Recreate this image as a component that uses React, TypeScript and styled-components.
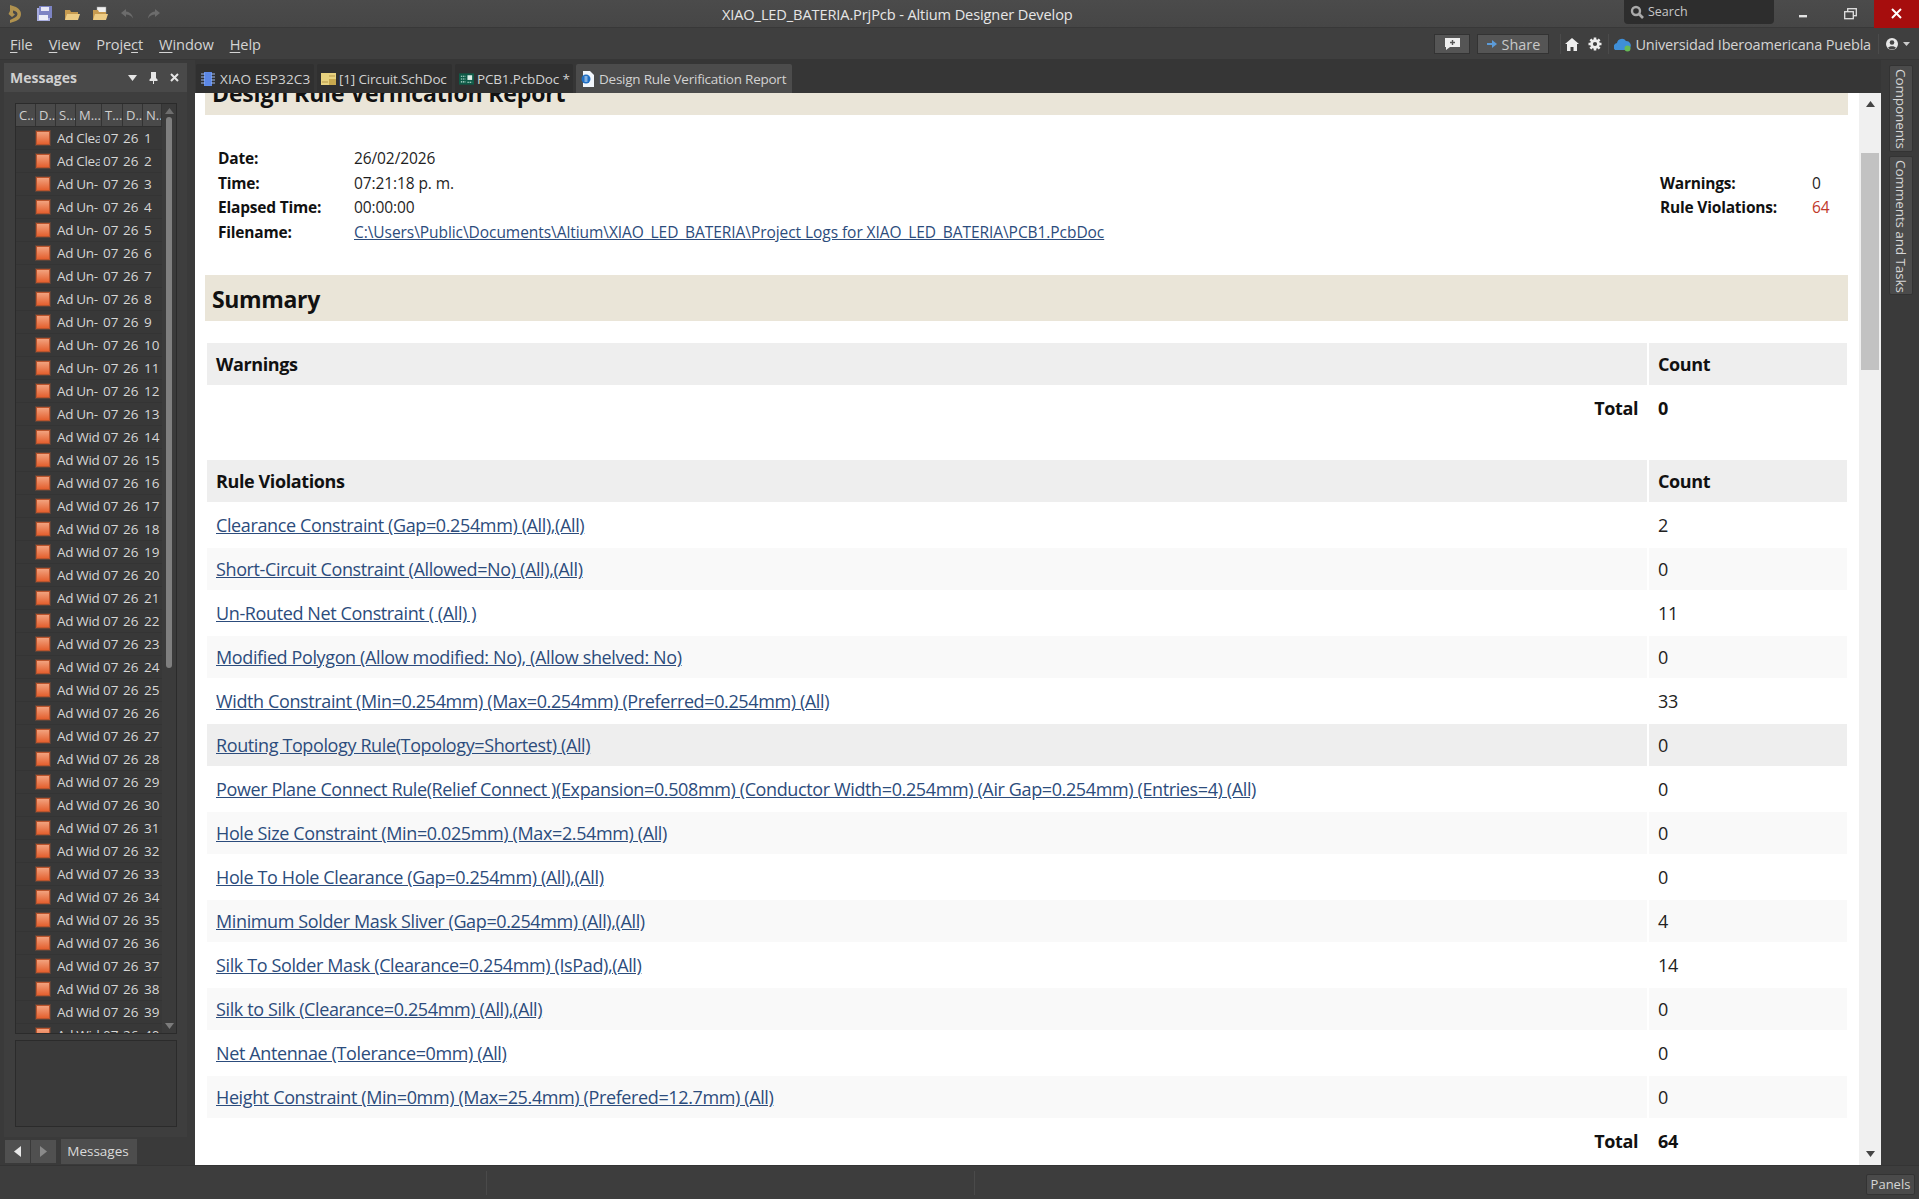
import React from "react";
import styled, { createGlobalStyle } from "styled-components";

const Global = createGlobalStyle`
  html, body { margin: 0; padding: 0; background: #3a3a3a; overflow: hidden; }
  * { box-sizing: border-box; }
  body { font-family: "Open Sans", "Noto Sans", "Liberation Sans", sans-serif; }
`;

const Shell = styled.div`
  width: 1919px; height: 1199px; display: flex; flex-direction: column;
  background: #3a3a3a; color: #dcdcdc; overflow: hidden;
`;

/* ---------- title bar ---------- */
const TitleBar = styled.header`
  height: 28px; flex: none; display: flex; align-items: center; position: relative;
  background: linear-gradient(#4b4b4b, #464646);
  border-bottom: 1px solid #383838;
`;
const QuickTools = styled.div`
  display: flex; align-items: center; gap: 11px; padding-left: 7px; width: 420px;
`;
const TitleText = styled.div`
  position: absolute; left: 722px; top: 4px; white-space: nowrap;
  font-size: 14.6px; line-height: 21px; letter-spacing: -0.12px; color: #e6e6e6;
`;
const TitleRight = styled.div`
  margin-left: auto; display: flex; align-items: flex-start; height: 28px; position: relative;
`;
const SearchBox = styled.div`
  width: 150px; height: 24px; background: #2d2d2d; border-radius: 0 0 4px 4px;
  display: flex; align-items: center; gap: 4px; padding-left: 6px;
  font-size: 12.5px; color: #c8c8c8;
`;
const WinBtn = styled.div<{ $w: number; $close?: boolean; $pr?: number }>`
  width: ${p => p.$w}px; height: 28px; display: flex; align-items: center; justify-content: center;
  padding-right: ${p => p.$pr ?? 0}px;
  background: ${p => (p.$close ? "#a60d0d" : "transparent")};
`;

/* ---------- menu bar ---------- */
const MenuBar = styled.nav`
  height: 32px; flex: none; display: flex; align-items: center;
  background: #3f3f3f; border-bottom: 1px solid #363636; padding-left: 10px;
`;
const MenuItem = styled.span`
  font-size: 14.6px; margin-right: 16px; letter-spacing: -0.1px; color: #d4d4d4;
  u { text-underline-offset: 2px; }
`;
const MenuRight = styled.div`
  margin-left: auto; display: flex; align-items: center; height: 100%; padding-top: 1px;
`;
const SmallBtn = styled.div<{ $w: number }>`
  width: ${p => p.$w}px; height: 20px; background: #555; border: 1px solid #333;
  display: flex; align-items: center; justify-content: center; gap: 4px;
  font-size: 14.4px; color: #c9c9c9; margin-right: 7px;
`;
const Sep = styled.div<{ $l?: number; $r?: number }>`
  width: 1px; height: 20px; background: #4b4b4b; margin: 0 ${p => p.$r ?? 6}px 0 ${p => p.$l ?? 6}px;
`;
const IconGap = styled.span<{ $w: number }>`
  width: ${p => p.$w}px; flex: none;
`;
const OrgName = styled.span`
  font-size: 14.5px; color: #d4d4d4; letter-spacing: -0.18px; margin-left: 3px; white-space: nowrap;
`;

/* ---------- main ---------- */
const Main = styled.div`
  flex: 1; display: flex; min-height: 0;
`;
const LeftDock = styled.aside`
  width: 195px; flex: none; padding: 3px 8px 0 4px; display: flex; flex-direction: column;
`;
const Panel = styled.section`
  height: 1074px; flex: none; background: #3e3e3e; display: flex; flex-direction: column;
`;
const PanelHead = styled.div`
  height: 29px; flex: none; background: #494949; display: flex; align-items: center;
  padding: 0 8px 0 6px; font-size: 14px; font-weight: 700; color: #d0d0d0;
`;
const PanelTools = styled.div`
  margin-left: auto; display: flex; align-items: center; gap: 12px;
`;
const ListBox = styled.div`
  margin: 11px 10px 0 11px; height: 931px; flex: none; border: 1px solid #2b2b2b;
  background: #383838; display: flex; overflow: hidden;
`;
const ListBody = styled.div`
  width: 146px; flex: none; overflow: hidden;
`;
const ListHead = styled.div`
  height: 23px; display: grid; grid-template-columns: 20px 20px 20px 26px 21px 20px 19px;
  background: #4a4a4a; border-bottom: 1px solid #2f2f2f;
`;
const HeadCell = styled.span`
  font-size: 13px; line-height: 22px; padding-left: 3px; color: #cfcfcf; overflow: hidden;
  white-space: nowrap; border-right: 1px solid #333;
`;
const ListRow = styled.div`
  height: 23px; display: grid; grid-template-columns: 20px 21px 43px 3px 20px 21px 18px;
  border-bottom: 1px solid #343434; align-items: center;
`;
const RowCell = styled.span`
  font-size: 13.5px; line-height: 22px; color: #d6d6d6; overflow: hidden; white-space: nowrap;
`;
const KindCell = styled(RowCell)`
  letter-spacing: -0.35px;
`;
const WarnSquare = styled.span`
  display: block; width: 14px; height: 14px;
  background: linear-gradient(#f2a27e, #e4602f); border: 1px solid #b9542d; outline: 1px solid #5a4238;
`;
const ListScroll = styled.div`
  flex: 1; background: #3b3b3b; display: flex; flex-direction: column; align-items: center; padding-top: 4px;
`;
const ListThumb = styled.div`
  width: 6px; height: 551px; margin-top: 3px; background: #7f7f7f; border-radius: 3px;
`;
const ListSpacer = styled.div`
  flex: 1;
`;
const ListEnd = styled.span`
  height: 4px; flex: none;
`;
const DetailBox = styled.div`
  margin: 6px 10px 0 11px; height: 87px; flex: none; border: 1px solid #2b2b2b; background: #3a3a3a;
`;
const DockTabs = styled.div`
  display: flex; align-items: flex-start; padding: 3px 0 0 1px; gap: 1px;
`;
const ArrowBtn = styled.div`
  width: 25px; height: 23px; background: #505050; display: flex; align-items: center; justify-content: center;
`;
const DockTab = styled.div`
  margin-left: 4px; width: 76px; height: 25px; margin-top: -1px; background: #4d4d4d; font-size: 13.5px;
  line-height: 24px; text-align: center; color: #dadada; padding-right: 2px;
`;

/* ---------- center ---------- */
const Center = styled.div`
  flex: 1; min-width: 0; display: flex; flex-direction: column;
`;
const TabRow = styled.div`
  height: 33px; flex: none; display: flex; align-items: flex-end; gap: 3px; padding-left: 1px;
  background: #363636;
`;
const DocTab = styled.div<{ $w: number; $active?: boolean; $gap?: number; $ls?: number }>`
  width: ${p => p.$w}px; height: 29px; flex: none; display: flex; align-items: center;
  gap: ${p => p.$gap ?? 5}px; padding-left: ${p => (p.$gap ? 4 : 5)}px;
  background: ${p => (p.$active ? "#4c4c4c" : "#303030")};
  border-radius: 2px 2px 0 0; font-size: 13.5px; letter-spacing: ${p => p.$ls ?? -0.16}px; color: #d2d2d2; white-space: nowrap;
`;
const Viewer = styled.div`
  flex: 1; min-height: 0; display: flex; background: #fff;
`;
const Report = styled.main`
  flex: 1; min-width: 0; overflow: hidden; padding: 0 11px 0 10px; color: #1e1e1e;
`;
const Band = styled.h2<{ $clip?: boolean }>`
  margin: ${p => (p.$clip ? "-24px 0 0 0" : "0")}; height: 46px; background: #eae5d8;
  padding-left: 7px;
  font-size: 23px; font-weight: 700; line-height: 48px; color: #111;
  letter-spacing: ${p => (p.$clip ? "-0.15px" : "-0.35px")};
`;
const Meta = styled.div`
  display: flex; justify-content: space-between; align-items: center; height: 160px; padding: 0 16px 0 13px;
`;
const MetaGrid = styled.dl<{ $cols: string }>`
  margin: 0; display: grid; grid-template-columns: ${p => p.$cols}; grid-auto-rows: 24.8px; align-items: center;
  font-size: 15.5px;
  dt { font-weight: 700; color: #111; letter-spacing: -0.2px; }
  dd { margin: 0; letter-spacing: -0.1px; }
  a { color: #2c4c7c; text-decoration: underline; white-space: nowrap; letter-spacing: -0.06px; }
`;
const Danger = styled.dd`
  color: #c0392b;
`;
const Table = styled.table`
  width: 1644px; border-collapse: separate; border-spacing: 2px 2px; margin: 20px 0 0 0; table-layout: fixed;
  & + & { margin-top: 27px; }
`;
const Th = styled.th`
  height: 42px; background: #eeeeee; text-align: left; padding: 0 9px; font-size: 18px; font-weight: 700; color: #111;
  letter-spacing: -0.4px;
`;
const Tr = styled.tr<{ $tone: "white" | "soft" | "hover" }>`
  background: ${p => (p.$tone === "hover" ? "#eeeeee" : p.$tone === "soft" ? "#f9f9f9" : "#fff")};
`;
const Td = styled.td`
  height: 42px; padding: 0 9px; font-size: 18px; white-space: nowrap; color: #222; letter-spacing: -0.38px;
  a { color: #2c4c7c; text-decoration: underline; }
`;
const TotalLabel = styled.td`
  height: 42px; padding: 0 9px; text-align: right; font-size: 18px; font-weight: 700; color: #111; letter-spacing: -0.4px;
`;
const TotalValue = styled(TotalLabel)`
  text-align: left;
`;
const Track = styled.div`
  width: 22px; flex: none; background: #f0f0f0; display: flex; flex-direction: column; align-items: center; padding-top: 8px;
`;
const Thumb = styled.div`
  width: 18px; height: 217px; margin-top: 46px; background: #c2c2c2;
`;
const TrackSpacer = styled.div`
  flex: 1;
`;
const TrackEnd = styled.span`
  height: 8px; flex: none;
`;
const RightStrip = styled.aside`
  width: 38px; flex: none; display: flex; flex-direction: column; align-items: center; gap: 4px; padding: 5px 0 0 2px;
`;
const SideTab = styled.div<{ $h: number }>`
  width: 24px; height: ${p => p.$h}px; background: #4b4b4b; border: 1px solid #333; border-radius: 2px;
  writing-mode: vertical-rl; font-size: 13.5px; line-height: 22px; padding-top: 3px; color: #d6d6d6; letter-spacing: -0.1px;
  white-space: nowrap;
`;

/* ---------- status ---------- */
const StatusBar = styled.footer`
  height: 34px; flex: none; display: flex; align-items: center; background: #3d3d3d; border-top: 1px solid #343434;
`;
const StatusCell = styled.div<{ $w: number }>`
  width: ${p => p.$w}px; height: 24px; border-right: 1px solid #4a4a4a;
`;
const PanelsBtn = styled.div`
  margin: 4px 4px 0 auto; width: 49px; height: 21px; background: #4a4a4a; border: 1px solid #333;
  font-size: 13px; line-height: 19px; text-align: center; color: #d6d6d6; border-radius: 2px;
`;

/* ---------- icons ---------- */
const Logo = () => (
  <svg width="18" height="20" viewBox="0 0 18 20"><path d="M3 1 L9 3 Q14 6 14 10 Q14 15 9 17 L3 19 L3 16 L8 13.500 Q10.500 12 10.500 10 Q10.500 8 8 7 L6 6.500 L6 9 L8 10.500 L5 13 L1.500 10 L3 7Z" fill="#b0924f" /></svg>
);
const Save = () => (
  <svg width="17" height="17" viewBox="0 0 17 17"><rect x="1" y="3" width="13" height="13" fill="#a9aee0" /><rect x="3" y="1" width="13" height="12" fill="#7d84c4" /><rect x="5" y="2" width="8" height="4" fill="#e6e6f4" /><rect x="3" y="10" width="9" height="5" fill="#eceef8" /></svg>
);
const Folder = ({ doc }: { doc?: boolean }) => (
  <svg width="17" height="16" viewBox="0 0 17 16">
    {doc && <rect x="5" y="1" width="9" height="9" fill="#f0f0f0" stroke="#999" strokeWidth=".5" />}
    <path d="M1 4h5l1 2h7v8H1z" fill="#c79b50" /><path d="M3 8h13l-2 6H1z" fill="#edcc85" />
  </svg>
);
const Undo = ({ flip }: { flip?: boolean }) => (
  <svg width="15" height="12" viewBox="0 0 15 12" style={flip ? { transform: "scaleX(-1)" } : undefined}>
    <path d="M6 1 1 5l5 4V6.500c3 0 5 1 7 4-.5-4-3-6.500-7-7z" fill="#6c6c6c" />
  </svg>
);
const Magnifier = () => (
  <svg width="14" height="14" viewBox="0 0 14 14"><circle cx="6" cy="6" r="4" fill="none" stroke="#aaa" strokeWidth="2.400" /><path d="M9 9l4 4" stroke="#aaa" strokeWidth="2.600" /></svg>
);
const Minimize = () => <svg width="10" height="10" viewBox="0 0 10 10"><rect x="1" y="6" width="8" height="2.400" fill="#e2e2e2" /></svg>;
const Restore = () => (
  <svg width="13" height="12" viewBox="0 0 13 12"><rect x="3.700" y=".7" width="8.600" height="7" fill="none" stroke="#e2e2e2" strokeWidth="1.300" /><rect x=".7" y="3.700" width="8.600" height="7" fill="#494949" stroke="#e2e2e2" strokeWidth="1.300" /></svg>
);
const CloseX = () => <svg width="11" height="11" viewBox="0 0 11 11"><path d="M1 1l9 9M10 1l-9 9" stroke="#fff" strokeWidth="2" /></svg>;
const CommentPlus = () => (
  <svg width="17" height="14" viewBox="0 0 17 14"><path d="M1 1h15v9H6l-4 3v-3H1z" fill="#eee" /><path d="M8.500 3v5M6 5.500h5" stroke="#555" strokeWidth="1.400" /></svg>
);
const ShareArrow = () => <svg width="11" height="10" viewBox="0 0 11 10"><path d="M0 4h5V1l5 4-5 4V6H0z" fill="#5c9bd8" /></svg>;
const Home = () => <svg width="14" height="13" viewBox="0 0 14 13"><path d="M7 0l7 6h-2v7H8.500V9h-3v4H2V6H0z" fill="#eee" /></svg>;
const Gear = () => (
  <svg width="14" height="14" viewBox="0 0 14 14">
    <g stroke="#eee" strokeWidth="2.600">
      <path d="M7 .5v13M.5 7h13" />
      <path d="M2.400 2.400l9.200 9.200M11.600 2.400l-9.200 9.200" />
    </g>
    <circle cx="7" cy="7" r="4.800" fill="#eee" />
    <circle cx="7" cy="7" r="2.100" fill="#3f3f3f" />
  </svg>
);
const Cloud = () => (
  <svg width="18" height="15" viewBox="0 0 18 15"><path d="M1 13a4 4 0 0 1 2-7 5 5 0 0 1 9-2 4.500 4.500 0 0 1 4 7v2z" fill="#3f8fd8" /><circle cx="13.500" cy="11.500" r="3" fill="#66bb55" /></svg>
);
const User = () => (
  <svg width="26" height="14" viewBox="0 0 26 14"><circle cx="7" cy="7" r="6" fill="#e8e8e8" /><circle cx="7" cy="5.500" r="2.300" fill="#444" /><path d="M3 11c1-2.500 7-2.500 8 0a6 6 0 0 1-8 0z" fill="#444" /><path d="M18 5h7l-3.500 4z" fill="#ccc" /></svg>
);
const DownTri = () => <svg width="9" height="6" viewBox="0 0 9 6"><path d="M0 0h9L4.500 6z" fill="#e6e6e6" /></svg>;
const Pin = () => <svg width="9" height="12" viewBox="0 0 9 12"><path d="M2 0h5v6l1.500 1.500V9H5v3H4V9H.5V7.500L2 6z" fill="#e6e6e6" /></svg>;
const SmallX = () => <svg width="9" height="9" viewBox="0 0 9 9"><path d="M1 1l7 7M8 1L1 8" stroke="#e6e6e6" strokeWidth="2" /></svg>;
const Tri = ({ dir, color }: { dir: "up" | "down" | "left" | "right"; color: string }) => {
  const d = { up: "M0 6 4.500 0 9 6z", down: "M0 0h9L4.500 6z", left: "M7 0v11L0 5.500z", right: "M0 0v11l7-5.500z" }[dir];
  const h = dir === "left" || dir === "right";
  return <svg width={h ? 7 : 9} height={h ? 11 : 6} viewBox={h ? "0 0 7 11" : "0 0 9 6"}><path d={d} fill={color} /></svg>;
};
const ChipIcon = () => (
  <svg width="14" height="16" viewBox="0 0 14 16"><rect x="3" y="1" width="8" height="14" fill="#5f8be8" /><path d="M0 3h14M0 6h14M0 9h14M0 12h14" stroke="#9db9f0" strokeWidth="1.200" /><rect x="4" y="2" width="6" height="12" fill="#5b87e6" /></svg>
);
const SchIcon = () => (
  <svg width="15" height="12" viewBox="0 0 15 12"><rect width="15" height="12" fill="#e8d27f" /><rect x="8" y="6" width="7" height="6" fill="#c9a94f" /><path d="M8 3h6M1 9h6" stroke="#b5954a" /></svg>
);
const PcbIcon = () => (
  <svg width="15" height="12" viewBox="0 0 16 12"><rect width="16" height="12" fill="#0f5a47" /><rect x="9" y="2" width="5" height="5" fill="#dfeee8" /><path d="M2 3h5M2 6h5M2 9h5M9 9.500h5" stroke="#c6e6da" strokeWidth="1.200" strokeDasharray="1.500 .8" /></svg>
);
const DocIcon = () => (
  <svg width="13" height="16" viewBox="0 0 13 16"><path d="M2 0h7l4 4v12H2z" fill="#f2f6fb" /><circle cx="5" cy="8" r="4.500" fill="#1f6fc4" /><path d="M3.500 8h3M3.500 6h3M3.500 10h3" stroke="#fff" strokeWidth=".9" /></svg>
);

/* ---------- data ---------- */
const messages = Array.from({ length: 41 }, (_, i) => ({
  n: i + 1,
  kind: i < 2 ? "Clea" : i < 13 ? "Un-" : "Wid",
}));

const rules: [string, number][] = [
  ["Clearance Constraint (Gap=0.254mm) (All),(All)", 2],
  ["Short-Circuit Constraint (Allowed=No) (All),(All)", 0],
  ["Un-Routed Net Constraint ( (All) )", 11],
  ["Modified Polygon (Allow modified: No), (Allow shelved: No)", 0],
  ["Width Constraint (Min=0.254mm) (Max=0.254mm) (Preferred=0.254mm) (All)", 33],
  ["Routing Topology Rule(Topology=Shortest) (All)", 0],
  ["Power Plane Connect Rule(Relief Connect )(Expansion=0.508mm) (Conductor Width=0.254mm) (Air Gap=0.254mm) (Entries=4) (All)", 0],
  ["Hole Size Constraint (Min=0.025mm) (Max=2.54mm) (All)", 0],
  ["Hole To Hole Clearance (Gap=0.254mm) (All),(All)", 0],
  ["Minimum Solder Mask Sliver (Gap=0.254mm) (All),(All)", 4],
  ["Silk To Solder Mask (Clearance=0.254mm) (IsPad),(All)", 14],
  ["Silk to Silk (Clearance=0.254mm) (All),(All)", 0],
  ["Net Antennae (Tolerance=0mm) (All)", 0],
  ["Height Constraint (Min=0mm) (Max=25.4mm) (Prefered=12.7mm) (All)", 0],
];

const toneOf = (i: number): "white" | "soft" | "hover" => (i === 5 ? "hover" : i % 2 ? "soft" : "white");

const Cols = () => (
  <colgroup>
    <col style={{ width: 1440 }} />
    <col />
  </colgroup>
);

export default function App() {
  return (
    <Shell>
      <Global />
      <TitleBar>
        <QuickTools>
          <Logo /><Save /><Folder /><Folder doc /><Undo /><Undo flip />
        </QuickTools>
        <TitleText>XIAO_LED_BATERIA.PrjPcb - Altium Designer Develop</TitleText>
        <TitleRight>
          <SearchBox><Magnifier />Search</SearchBox>
          <WinBtn $w={58}><Minimize /></WinBtn>
          <WinBtn $w={42} $pr={6}><Restore /></WinBtn>
          <WinBtn $w={45} $close><CloseX /></WinBtn>
        </TitleRight>
      </TitleBar>
      <MenuBar>
        <MenuItem><u>F</u>ile</MenuItem>
        <MenuItem><u>V</u>iew</MenuItem>
        <MenuItem>Proje<u>c</u>t</MenuItem>
        <MenuItem><u>W</u>indow</MenuItem>
        <MenuItem><u>H</u>elp</MenuItem>
        <MenuRight>
          <SmallBtn $w={36}><CommentPlus /></SmallBtn>
          <SmallBtn $w={72}><ShareArrow />Share</SmallBtn>
          <Sep $l={4} $r={4} />
          <Home />
          <IconGap $w={9} />
          <Gear />
          <Sep $l={6} $r={5} />
          <Cloud />
          <OrgName>Universidad Iberoamericana Puebla</OrgName>
          <Sep $l={7} $r={6} />
          <User />
          <IconGap $w={8} />
        </MenuRight>
      </MenuBar>
      <Main>
        <LeftDock>
          <Panel>
            <PanelHead>
              Messages
              <PanelTools><DownTri /><Pin /><SmallX /></PanelTools>
            </PanelHead>
            <ListBox>
              <ListBody>
                <ListHead>
                  {["C...", "D...", "S...", "M...", "T...", "D...", "N..."].map((h, i) => (
                    <HeadCell key={i}>{h}</HeadCell>
                  ))}
                </ListHead>
                {messages.map(m => (
                  <ListRow key={m.n}>
                    <span />
                    <WarnSquare />
                    <KindCell>Ad {m.kind}</KindCell>
                    <span />
                    <RowCell>07</RowCell>
                    <RowCell>26</RowCell>
                    <RowCell>{m.n}</RowCell>
                  </ListRow>
                ))}
              </ListBody>
              <ListScroll>
                <Tri dir="up" color="#6e6e6e" />
                <ListThumb />
                <ListSpacer />
                <Tri dir="down" color="#7c7c7c" />
                <ListEnd />
              </ListScroll>
            </ListBox>
            <DetailBox />
          </Panel>
          <DockTabs>
            <ArrowBtn><Tri dir="left" color="#e8e8e8" /></ArrowBtn>
            <ArrowBtn><Tri dir="right" color="#8a8a8a" /></ArrowBtn>
            <DockTab>Messages</DockTab>
          </DockTabs>
        </LeftDock>
        <Center>
          <TabRow>
            <DocTab $w={118} $ls={0.12}><ChipIcon />XIAO ESP32C3</DocTab>
            <DocTab $w={135} $gap={3}><SchIcon />[1] Circuit.SchDoc</DocTab>
            <DocTab $w={118} $gap={3}><PcbIcon />PCB1.PcbDoc *</DocTab>
            <DocTab $w={216} $active $ls={-0.24}><DocIcon />Design Rule Verification Report</DocTab>
          </TabRow>
          <Viewer>
            <Report>
              <Band $clip>Design Rule Verification Report</Band>
              <Meta>
                <MetaGrid $cols="136px auto">
                  <dt>Date:</dt><dd>26/02/2026</dd>
                  <dt>Time:</dt><dd>07:21:18 p. m.</dd>
                  <dt>Elapsed Time:</dt><dd>00:00:00</dd>
                  <dt>Filename:</dt>
                  <dd><a href="#r">C:\Users\Public\Documents\Altium\XIAO_LED_BATERIA\Project Logs for XIAO_LED_BATERIA\PCB1.PcbDoc</a></dd>
                </MetaGrid>
                <MetaGrid $cols="152px 20px">
                  <dt>Warnings:</dt><dd>0</dd>
                  <dt>Rule Violations:</dt><Danger>64</Danger>
                </MetaGrid>
              </Meta>
              <Band>Summary</Band>
              <Table>
                <Cols />
                <thead><tr><Th>Warnings</Th><Th>Count</Th></tr></thead>
                <tbody><tr><TotalLabel>Total</TotalLabel><TotalValue>0</TotalValue></tr></tbody>
              </Table>
              <Table>
                <Cols />
                <thead><tr><Th>Rule Violations</Th><Th>Count</Th></tr></thead>
                <tbody>
                  {rules.map(([name, count], i) => (
                    <Tr key={name} $tone={toneOf(i)}>
                      <Td><a href="#r">{name}</a></Td>
                      <Td>{count}</Td>
                    </Tr>
                  ))}
                  <tr><TotalLabel>Total</TotalLabel><TotalValue>64</TotalValue></tr>
                </tbody>
              </Table>
            </Report>
            <Track>
              <Tri dir="up" color="#444" />
              <Thumb />
              <TrackSpacer />
              <Tri dir="down" color="#444" />
              <TrackEnd />
            </Track>
          </Viewer>
        </Center>
        <RightStrip>
          <SideTab $h={87}>Components</SideTab>
          <SideTab $h={139}>Comments and Tasks</SideTab>
        </RightStrip>
      </Main>
      <StatusBar>
        <StatusCell $w={487} />
        <StatusCell $w={488} />
        <PanelsBtn>Panels</PanelsBtn>
      </StatusBar>
    </Shell>
  );
}
